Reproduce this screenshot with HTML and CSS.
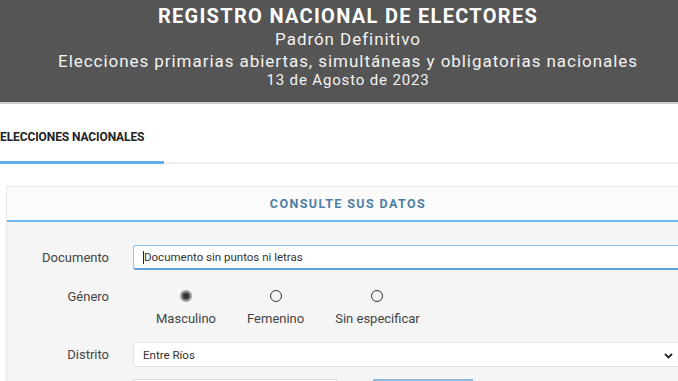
FILE: index.html
```html
<!DOCTYPE html>
<html lang="es">
<head>
    <meta charset="UTF-8">
    <meta name="viewport" content="width=device-width, initial-scale=1.0">
    <title>Padrón Definitivo</title>
    <link rel="stylesheet" href="styles.css">
</head>
<body>
    <header class="banner">
        <h1 class="banner-title">REGISTRO NACIONAL DE ELECTORES</h1>
        <p class="banner-sub">Padrón Definitivo</p>
        <p class="banner-sub">Elecciones primarias abiertas, simultáneas y obligatorias nacionales</p>
        <p class="banner-date">13 de Agosto de 2023</p>
    </header>

    <nav class="tabs">
        <a class="tab active">ELECCIONES NACIONALES</a>
    </nav>

    <section class="card">
        <div class="card-head">CONSULTE SUS DATOS</div>
        <div class="card-body">
            <div class="row">
                <label class="row-label">Documento</label>
                <div class="field input-focus"><span class="caret"></span>Documento sin puntos ni letras</div>
            </div>
            <div class="row row-radio">
                <label class="row-label">Género</label>
                <div class="radios">
                    <div class="radio-item">
                        <span class="radio checked"></span>
                        <span>Masculino</span>
                    </div>
                    <div class="radio-item">
                        <span class="radio"></span>
                        <span>Femenino</span>
                    </div>
                    <div class="radio-item">
                        <span class="radio"></span>
                        <span>Sin especificar</span>
                    </div>
                </div>
            </div>
            <div class="row">
                <label class="row-label">Distrito</label>
                <div class="field select">
                    Entre Ríos
                    <svg class="chevron" width="9" height="6" viewBox="0 0 9 6"><path d="M1 1l3.5 3.5L8 1" fill="none" stroke="#222" stroke-width="1.8"/></svg>
                </div>
            </div>
            <div class="row row-last">
                <div class="captcha"></div>
                <div class="btn-search"></div>
            </div>
        </div>
    </section>
</body>
</html>
```

FILE: styles.css
```css
* {
    margin: 0;
    padding: 0;
    box-sizing: border-box;
}

body {
    font-family: Roboto, "Liberation Sans", sans-serif;
    background-color: #ffffff;
    color: #333333;
    width: 678px;
    height: 381px;
    overflow: hidden;
}

.banner {
    background-color: #555555;
    border-bottom: 2px solid #cfcfcf;
    height: 104px;
    text-align: center;
    color: #f2f2f2;
    padding-top: 5px;
    padding-left: 18px;
}

.banner-title {
    font-size: 20px;
    font-weight: 700;
    letter-spacing: 1.3px;
    line-height: 23px;
    color: #ffffff;
}

.banner-sub {
    font-size: 17px;
    letter-spacing: 0.95px;
    line-height: 21px;
    margin-top: 1px;
}

.banner-date {
    font-size: 15px;
    letter-spacing: 0.85px;
    line-height: 16px;
}

.tabs {
    display: flex;
    border-bottom: 2px solid #eeeeee;
    height: 60px;
}

.tab {
    display: block;
    width: 164px;
    font-size: 12px;
    font-weight: 700;
    color: #222222;
    padding-top: 26px;
    letter-spacing: -0.1px;
    border-bottom: 3px solid #5eaef0;
    margin-bottom: -2px;
}

.card {
    margin: 22px 0 0 6px;
    width: 684px;
    border: 1px solid #e6e6e6;
    background-color: #f5f5f5;
}

.card-head {
    background-color: #fbfbfb;
    height: 35px;
    line-height: 33px;
    text-align: center;
    font-size: 12.5px;
    font-weight: 700;
    letter-spacing: 1.4px;
    color: #4f7fa3;
    border-bottom: 2px solid #6cb8f2;
}

.card-body {
    padding-top: 23px;
}

.row {
    display: flex;
    align-items: center;
}

.row-label {
    width: 102px;
    text-align: right;
    font-size: 13px;
    color: #444444;
    flex-shrink: 0;
}

.field {
    margin-left: 24px;
    flex: 1;
    height: 25px;
    background-color: #ffffff;
    border: 1px solid #dddddd;
    border-radius: 3px;
    font-size: 11.5px;
    color: #333333;
    padding-left: 9px;
    display: flex;
    align-items: center;
}

.input-focus {
    border-color: #8cc3f0;
    border-bottom: 2px solid #5a9fd8;
    padding-left: 9px;
}

.caret {
    width: 1px;
    height: 13px;
    background-color: #222222;
}

.row-radio {
    align-items: flex-start;
    margin-top: 18px;
}

.row-radio .row-label {
    padding-top: 1px;
}

.radios {
    display: flex;
    margin-left: 47px;
}

.radio-item {
    display: flex;
    flex-direction: column;
    align-items: center;
    font-size: 13px;
    color: #444444;
    gap: 9px;
}

.radio-item + .radio-item {
    margin-left: 31px;
}

.radio {
    width: 12px;
    height: 12px;
    border: 1.5px solid #333333;
    border-radius: 50%;
    margin-top: 2px;
}

.radio.checked {
    border: 2px solid #9a9a9a;
    background-color: #333333;
    box-shadow: inset 0 0 0 1px #777777;
}

.row-radio + .row {
    margin-top: 16px;
}

.select {
    position: relative;
    border-color: #e2e2e2;
}

.chevron {
    position: absolute;
    right: 15px;
    top: 10px;
}

.row-last {
    margin-top: 12px;
    padding-left: 126px;
    gap: 36px;
}

.captcha {
    width: 204px;
    height: 30px;
    border: 1px solid #dddddd;
    background-color: #ffffff;
}

.btn-search {
    width: 100px;
    height: 30px;
    background-color: #d8e8f4;
    border-top: 2px solid #8bbbe0;
}
```
